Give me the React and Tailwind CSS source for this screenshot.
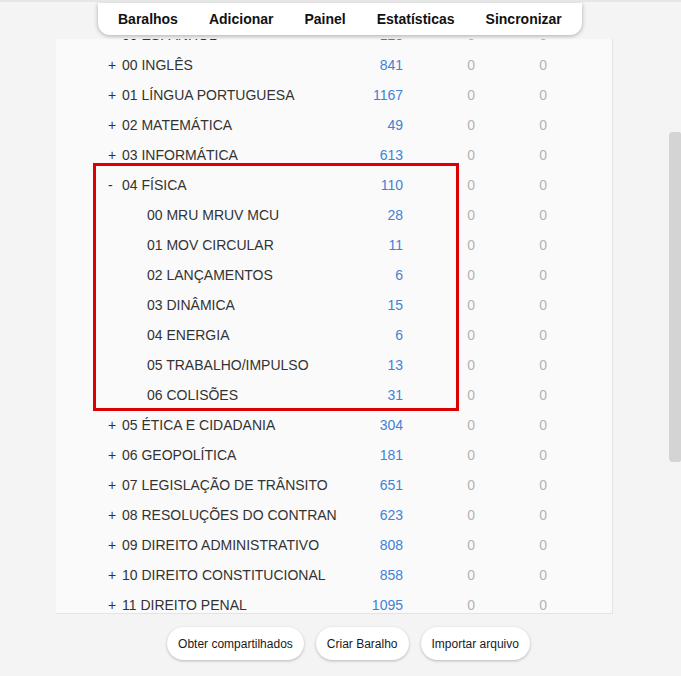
import React from "react";

const decks = [
  { name: "00 ESPANHOL", count: 123 },
  { name: "00 INGLÊS", count: 841 },
  { name: "01 LÍNGUA PORTUGUESA", count: 1167 },
  { name: "02 MATEMÁTICA", count: 49 },
  { name: "03 INFORMÁTICA", count: 613 },
  {
    name: "04 FÍSICA",
    count: 110,
    open: true,
    children: [
      { name: "00 MRU MRUV MCU", count: 28 },
      { name: "01 MOV CIRCULAR", count: 11 },
      { name: "02 LANÇAMENTOS", count: 6 },
      { name: "03 DINÂMICA", count: 15 },
      { name: "04 ENERGIA", count: 6 },
      { name: "05 TRABALHO/IMPULSO", count: 13 },
      { name: "06 COLISÕES", count: 31 },
    ],
  },
  { name: "05 ÉTICA E CIDADANIA", count: 304 },
  { name: "06 GEOPOLÍTICA", count: 181 },
  { name: "07 LEGISLAÇÃO DE TRÂNSITO", count: 651 },
  { name: "08 RESOLUÇÕES DO CONTRAN", count: 623 },
  { name: "09 DIREITO ADMINISTRATIVO", count: 808 },
  { name: "10 DIREITO CONSTITUCIONAL", count: 858 },
  { name: "11 DIREITO PENAL", count: 1095 },
  { name: "12 DIREITO PROCESSUAL PENAL", count: 742 },
  { name: "13 DIREITO CIVIL", count: 515 },
];

const Row = ({ deck, child }) => (
  <div className="grid grid-cols-[250px_45px_72px_72px] h-[30px] items-center">
    <div className="flex items-center text-[#333333] whitespace-nowrap">
      {child ? (
        <span className="w-[39px]" />
      ) : (
        <span className="w-[14px]">{deck.open ? "-" : "+"}</span>
      )}
      <span>{deck.name}</span>
    </div>
    <div className="text-right text-[#3f82d6]">{deck.count}</div>
    <div className="text-right text-[#b4b4b4]">0</div>
    <div className="text-right text-[#b4b4b4]">0</div>
  </div>
);

const App = () => {
  const navItems = ["Baralhos", "Adicionar", "Painel", "Estatísticas", "Sincronizar"];

  return (
    <div className="relative h-[676px] w-full overflow-hidden bg-[#f4f4f4] border-t-2 border-[#e6e6e6] font-['Liberation_Sans',Arial,sans-serif] text-[14px]">
      {/* Deck list */}
      <div className="ml-[56px] mt-[37px] w-[557px] h-[575px] overflow-hidden bg-[#fafafa] border-r border-b border-[#e4e4e4]">
        <div className="-mt-[19px] pl-[52px]">
          {decks.map((deck) => (
            <React.Fragment key={deck.name}>
              <Row deck={deck} />
              {deck.open && deck.children.map((c) => <Row key={c.name} deck={c} child />)}
            </React.Fragment>
          ))}
        </div>
      </div>

      {/* Bottom buttons */}
      <div className="flex justify-center gap-[12px] pl-[16px] mt-[13px]">
        {["Obter compartilhados", "Criar Baralho", "Importar arquivo"].map((label) => (
          <button
            key={label}
            className="h-[33px] px-[11px] rounded-full bg-white text-[12px] text-[#1a1a1a] shadow-[0_1px_3px_rgba(0,0,0,0.25)]"
          >
            {label}
          </button>
        ))}
      </div>

      {/* Top navigation */}
      <div className="absolute top-[1px] left-[98px] flex items-center gap-[31px] h-[32px] px-[20px] bg-white rounded-b-[12px] shadow-[0_1px_4px_rgba(0,0,0,0.3)] font-bold text-[#111111]">
        {navItems.map((item) => (
          <span key={item}>{item}</span>
        ))}
      </div>

      {/* Annotation box */}
      <div className="absolute left-[93px] top-[161px] w-[366px] h-[248px] border-[3px] border-[#dd0000]" />

      {/* Scrollbar thumb */}
      <div className="absolute right-0 top-[130px] w-[12px] h-[330px] rounded-l-[4px] rounded-r-[2px] bg-[#d4d4d4]" />
    </div>
  );
};

export default App;
